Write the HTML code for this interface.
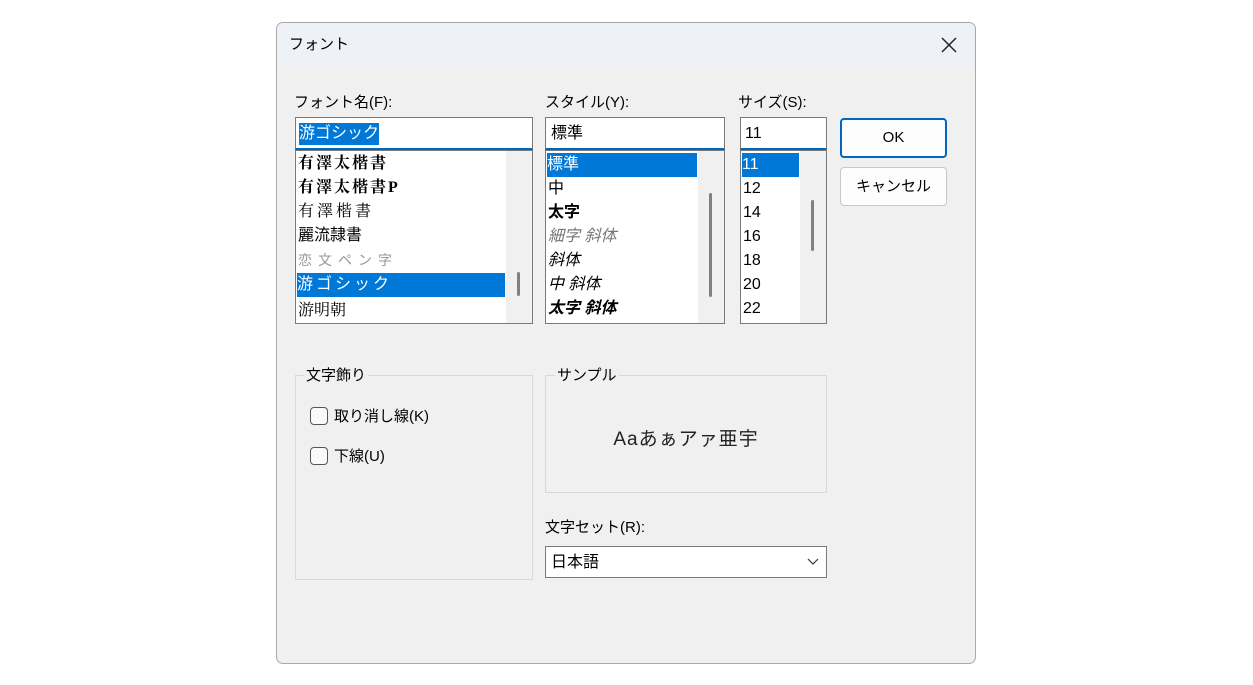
<!DOCTYPE html>
<html><head><meta charset="utf-8"><style>
body{margin:0;width:1253px;height:685px;background:#fff;position:relative;overflow:hidden;font-family:"Liberation Sans","Noto Sans CJK JP",sans-serif;color:#000}
.a{position:absolute}
.dlg{left:276px;top:22px;width:698px;height:640px;background:#f0f0f0;border:1px solid #a8a8a8;border-radius:7px;overflow:hidden}
.title{left:0;top:0;width:698px;height:45px;background:#eef2f7}
.lbl{font-size:15px;line-height:18px}
.box{background:#fff;border:1px solid #7a7a7a;box-sizing:border-box}
.edit{border-bottom:2px solid #0067c0}
.it{position:absolute;left:2px;font-size:16px;line-height:24px;height:24px;white-space:nowrap}
.sel{background:#0078d7;color:#fff}
.sb{position:absolute;top:0;right:0;width:26px;height:100%;background:#f0f0f0}
.th{position:absolute;width:3px;background:#808080;border-radius:2px}
.btn{background:#fdfdfd;border:1px solid #c8c8c8;border-radius:4px;box-sizing:border-box;font-size:15px;text-align:center}
.grp{border:1px solid #d8d8d8;box-sizing:border-box}
.cb{width:18px;height:18px;border:1px solid #555;border-radius:4px;box-sizing:border-box;background:#fafafa}
</style></head><body>
<div class="a dlg">
 <div class="a title"></div>
</div>
<div class="a lbl" style="left:289px;top:36px;font-size:15px">フォント</div>
<svg class="a" style="left:941px;top:37px" width="16" height="16"><path d="M1 1L15 15M15 1L1 15" stroke="#222" stroke-width="1.5"/></svg>

<div class="a lbl" style="left:294px;top:94px">フォント名(F):</div>
<div class="a lbl" style="left:545px;top:94px">スタイル(Y):</div>
<div class="a lbl" style="left:738px;top:94px">サイズ(S):</div>

<div class="a box edit" style="left:295px;top:117px;width:238px;height:33px"><span class="a" style="left:3px;top:5px;background:#0078d7;color:#fff;font-size:16px;line-height:22px">游ゴシック</span></div>
<div class="a box edit" style="left:545px;top:117px;width:180px;height:33px"><span class="a" style="left:5px;top:5px;font-size:16px;line-height:22px">標準</span></div>
<div class="a box edit" style="left:740px;top:117px;width:87px;height:33px"><span class="a" style="left:4px;top:5px;font-size:16px;line-height:22px">11</span></div>

<div class="a box" style="left:295px;top:150px;width:238px;height:174px">
 <div class="sb"><div class="th" style="left:11px;top:121px;height:24px"></div></div>
 <div class="it" style="top:1px;font-family:'Liberation Serif','Noto Serif CJK SC',serif;font-weight:bold;letter-spacing:2px">有澤太楷書</div>
 <div class="it" style="top:25px;font-family:'Liberation Serif','Noto Serif CJK SC',serif;font-weight:bold;letter-spacing:2px">有澤太楷書P</div>
 <div class="it" style="top:49px;font-family:'Liberation Serif','Noto Serif CJK SC',serif;letter-spacing:3px">有澤楷書</div>
 <div class="it" style="top:73px">麗流隷書</div>
 <div class="it" style="top:97px;color:#999;letter-spacing:6px;font-size:14px">恋文ペン字</div>
 <div class="it sel" style="top:122px;left:1px;width:208px;letter-spacing:3px">游ゴシック</div>
 <div class="it" style="top:146px;font-family:'Noto Serif CJK SC',serif">游明朝</div>
</div>

<div class="a box" style="left:545px;top:150px;width:180px;height:174px">
 <div class="sb"><div class="th" style="left:11px;top:42px;height:104px"></div></div>
 <div class="it sel" style="top:2px;left:1px;width:150px">標準</div>
 <div class="it" style="top:26px">中</div>
 <div class="it" style="top:50px;font-weight:bold">太字</div>
 <div class="it" style="top:74px;font-style:italic;color:#777">細字 斜体</div>
 <div class="it" style="top:98px;font-style:italic">斜体</div>
 <div class="it" style="top:122px;font-style:italic">中 斜体</div>
 <div class="it" style="top:146px;font-style:italic;font-weight:bold">太字 斜体</div>
</div>

<div class="a box" style="left:740px;top:150px;width:87px;height:174px">
 <div class="sb"><div class="th" style="left:11px;top:49px;height:51px"></div></div>
 <div class="it sel" style="top:2px;left:1px;width:57px">11</div>
 <div class="it" style="top:26px">12</div>
 <div class="it" style="top:50px">14</div>
 <div class="it" style="top:74px">16</div>
 <div class="it" style="top:98px">18</div>
 <div class="it" style="top:122px">20</div>
 <div class="it" style="top:146px">22</div>
</div>

<div class="a btn" style="left:840px;top:118px;width:107px;height:40px;border:2px solid #0067c0;line-height:36px">OK</div>
<div class="a btn" style="left:840px;top:167px;width:107px;height:39px;line-height:37px">キャンセル</div>

<div class="a grp" style="left:295px;top:375px;width:238px;height:205px"></div>
<div class="a lbl" style="left:304px;top:367px;background:#f0f0f0;padding:0 2px">文字飾り</div>
<div class="a cb" style="left:310px;top:407px"></div>
<div class="a lbl" style="left:334px;top:408px">取り消し線(K)</div>
<div class="a cb" style="left:310px;top:447px"></div>
<div class="a lbl" style="left:334px;top:448px">下線(U)</div>

<div class="a grp" style="left:545px;top:375px;width:282px;height:118px"></div>
<div class="a lbl" style="left:555px;top:367px;background:#f0f0f0;padding:0 2px">サンプル</div>
<div class="a" style="left:545px;top:428px;width:282px;text-align:center;font-size:19px;line-height:24px;letter-spacing:1px;color:#222">Aaあぁアァ亜宇</div>

<div class="a lbl" style="left:545px;top:519px">文字セット(R):</div>
<div class="a box" style="left:545px;top:546px;width:282px;height:32px"><span class="a" style="left:5px;top:5px;font-size:16px;line-height:22px">日本語</span>
 <svg class="a" style="left:261px;top:11px" width="12" height="8"><path d="M1 1L6 6L11 1" stroke="#333" fill="none" stroke-width="1.2"/></svg></div>
</body></html>
